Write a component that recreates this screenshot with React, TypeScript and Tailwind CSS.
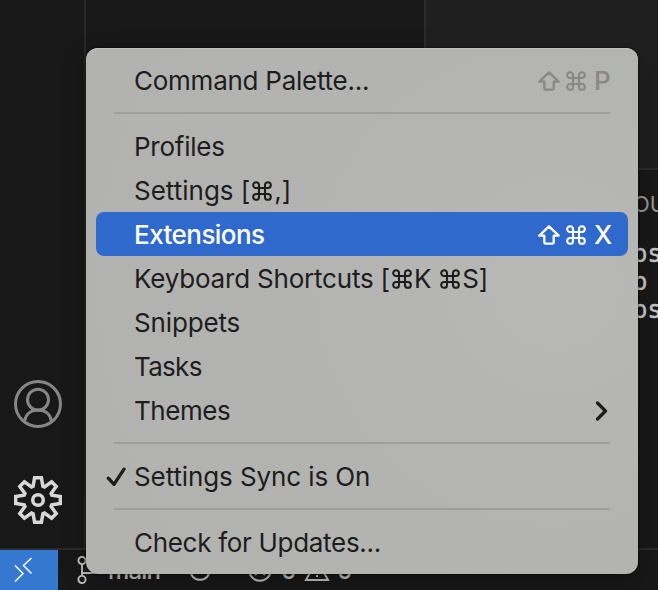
import React from 'react';

type Item = { label: React.ReactNode; spacing: string; keys?: string; active?: boolean; checked?: boolean; submenu?: boolean };

const Shift = () => (
  <svg width="22" height="20" viewBox="0 0 22 20" fill="none" stroke="currentColor" strokeWidth="2.300" strokeLinejoin="round">
    <path d="M11 1.300 1.300 10.700H6.300V17.600Q6.300 18.600 7.300 18.600H14.700Q15.700 18.600 15.700 17.600V10.700H20.700Z" />
  </svg>
);

const Cmd = ({ className = '' }: { className?: string }) => (
  <svg className={className} width="20" height="20" viewBox="0 0 20 20" fill="none" stroke="currentColor" strokeWidth="2.100">
    <path d="M7 7H13V13H7ZM7 7V4.300A2.900 2.900 0 1 0 4.100 7ZM13 7H15.900A2.900 2.900 0 1 0 13 4.100ZM13 13V15.900A2.900 2.900 0 1 0 15.900 13ZM7 13H4.100A2.900 2.900 0 1 0 7 15.900Z" />
  </svg>
);

const InlineCmd = () => <Cmd className="mx-[2px] inline-block align-[-1px]" />;

const Row = ({ label, spacing, keys, active, checked, submenu }: Item) => (
  <div
    className={`mx-[10px] flex h-11 items-center rounded-[8px] pt-[2px] pr-[16px] ${active ? 'bg-[#2f69cb] font-medium text-white' : 'text-[#1d1d1d]'}`}
  >
    <div className="flex w-[38px] shrink-0 justify-start pl-[10px]">
      {checked && (
        <svg width="21" height="20" viewBox="0 0 21 20" fill="none" stroke="currentColor" strokeWidth="3.300" strokeLinecap="round" strokeLinejoin="round">
          <path d="M2.300 11.200 8 17.300 18 2.200" />
        </svg>
      )}
    </div>
    <span className={`whitespace-pre text-[26px] leading-[42px] ${spacing}`}>{label}</span>
    {keys && (
      <div className={`ml-auto flex items-center ${active ? '' : 'font-medium text-[#888887]'}`}>
        <Shift />
        <Cmd className="ml-[6px]" />
        <span className="ml-[8px] w-[18px] text-[26px] leading-[42px]">{keys}</span>
      </div>
    )}
    {submenu && (
      <svg className="mr-[3px] ml-auto" width="14" height="20" viewBox="0 0 14 20" fill="none" stroke="currentColor" strokeWidth="3.200" strokeLinecap="round" strokeLinejoin="round">
        <path d="M2.500 2 10.500 10 2.500 18" />
      </svg>
    )}
  </div>
);

const Separator = () => (
  <div className="mx-7 flex h-[22px] items-center">
    <div className="h-[2px] w-full bg-[#9e9e9d]" />
  </div>
);

export default function App() {
  return (
    <div className="relative flex h-[590px] w-[658px] flex-col overflow-hidden bg-[#181818] font-['Inter',sans-serif]">
      <div className="flex h-[548px]">
        <div className="flex w-[86px] shrink-0 flex-col items-center gap-[48px] border-r-2 border-[#282828] pt-[380px] pr-[8px]">
          <svg className="shrink-0" width="48" height="48" viewBox="0 0 48 48" fill="none" stroke="#868686" strokeWidth="3">
            <circle cx="24" cy="24" r="22.500" />
            <circle cx="24" cy="19.700" r="10.500" />
            <path d="M10.500 41.500C11.500 34.500 16.500 30 24 30S36.500 34.500 37.500 41.500" />
          </svg>
          <svg className="shrink-0" width="48" height="48" viewBox="0 0 48 48" fill="none" stroke="#d7d7d7" strokeWidth="3.500">
            <path d="M20.600 1.700H27.400L28.900 10.200L30.500 10.900L37.600 5.800L42.200 10.400L37.100 17.500L37.800 19.100L46.300 20.600V27.400L37.800 28.900L37.100 30.500L42.200 37.600L37.600 42.200L30.500 37.100L28.900 37.800L27.400 46.300H20.600L19.100 37.800L17.500 37.100L10.400 42.200L5.800 37.600L10.900 30.500L10.200 28.900L1.700 27.400V20.600L10.200 19.100L10.900 17.500L5.800 10.400L10.400 5.800L17.500 10.900L19.100 10.200Z" />
            <circle cx="24" cy="24" r="5.300" />
          </svg>
        </div>
        <div className="w-[340px] shrink-0 border-r-2 border-[#2b2b2b]" />
        <div className="flex min-w-0 flex-1 flex-col overflow-hidden">
          <div className="h-[168px] shrink-0 bg-[#1f1f1f]" />
          <div className="flex-1 border-t-2 border-[#2b2b2b] pl-[207px]">
            <div className="mt-[19px] h-[30px] text-[22px] leading-[30px] text-[#969696]">OUTPUT</div>
            <pre className="mt-[21px] font-['DejaVu_Sans_Mono',monospace] text-[24px] leading-[28px] text-[#c8c8c8] [-webkit-text-stroke:0.5px_#c8c8c8]">{'os\no\nos'}</pre>
          </div>
        </div>
      </div>
      <div className="flex h-[42px] border-t-2 border-[#2b2b2b] text-[24px] leading-[42px] font-medium text-[#c5c5c5]">
        <div className="flex w-[58px] items-center justify-center bg-[#3478cf] pr-[10px]">
          <svg width="20" height="26" viewBox="0 0 20 26" fill="none" stroke="#f5f5f5" strokeWidth="1.600">
            <path d="M1 8.500 9 16.500 1 24.500M17.500 1 9.500 8.500 17.500 16.500" />
          </svg>
        </div>
        <svg className="mt-[6px] ml-[18px]" width="30" height="28" viewBox="0 0 30 28" fill="none" stroke="currentColor" strokeWidth="1.900">
          <circle cx="6" cy="4.500" r="3.600" />
          <circle cx="6" cy="23.500" r="3.600" />
          <circle cx="22" cy="8" r="3.600" />
          <path d="M6 8V20M6 17H16Q22 17 22 12" />
        </svg>
        <span className="ml-[2px] w-[81px] tracking-[-0.8px]">main</span>
        <svg className="mt-[9px]" width="22" height="22" viewBox="0 0 22 22" fill="none" stroke="currentColor" strokeWidth="2">
          <circle cx="11" cy="11" r="9.800" />
        </svg>
        <svg className="mt-[8px] ml-[37px]" width="24" height="24" viewBox="0 0 24 24" fill="none" stroke="currentColor" strokeWidth="2">
          <circle cx="12" cy="12" r="10.800" />
          <path d="M7 7 17 17M17 7 7 17" />
        </svg>
        <span className="ml-[9px] w-[23px] tracking-[-1px]">0</span>
        <svg className="mt-[8px]" width="26" height="24" viewBox="0 0 26 24" fill="none" stroke="currentColor" strokeWidth="2">
          <path d="M13 2 24 22H2ZM13 9V15M13 17V19" />
        </svg>
        <span className="ml-[7px]">0</span>
      </div>

      <div className="absolute top-[48px] left-[86px] h-[526px] w-[552px] rounded-[12px] bg-[radial-gradient(circle_at_85%_45%,#b8b8b6,#b3b3b1_45%,#b2b2b0)] pt-[10px] shadow-[0_0_2px_#000,0_8px_24px_rgba(0,0,0,0.3),inset_0_1px_0_#c0c0bf]">
        <Row label="Command Palette..." spacing="tracking-[-0.25px]" keys="P" />
        <Separator />
        <Row label="Profiles" spacing="tracking-[-0.25px]" />
        <Row label={<>Settings [<InlineCmd />,]</>} spacing="tracking-[0px]" />
        <Row label="Extensions" spacing="tracking-[-0.55px]" keys="X" active />
        <Row label={<>Keyboard Shortcuts [<InlineCmd />K <InlineCmd />S]</>} spacing="tracking-[-0.2px]" />
        <Row label="Snippets" spacing="tracking-[-0.15px]" />
        <Row label="Tasks" spacing="tracking-[-0.7px]" />
        <Row label="Themes" spacing="tracking-[-0.45px]" submenu />
        <Separator />
        <Row label="Settings Sync is On" spacing="tracking-[-0.1px]" checked />
        <Separator />
        <Row label="Check for Updates..." spacing="tracking-[-0.3px]" />
      </div>
    </div>
  );
}
